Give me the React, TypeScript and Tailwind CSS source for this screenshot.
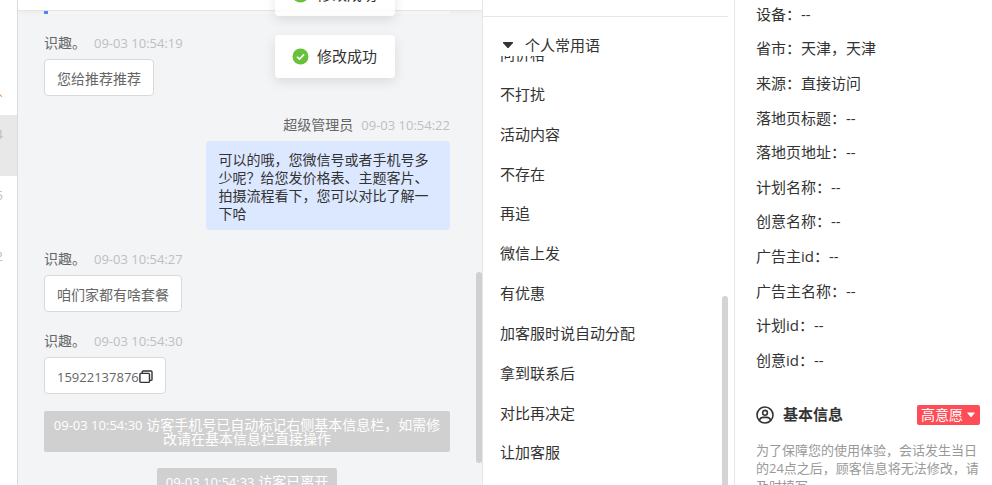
import React from "react";

const phrases = [
  "问价格",
  "不打扰",
  "活动内容",
  "不存在",
  "再追",
  "微信上发",
  "有优惠",
  "加客服时说自动分配",
  "拿到联系后",
  "对比再决定",
  "让加客服",
];

const details: [string, string][] = [
  ["设备", "--"],
  ["省市", "天津，天津"],
  ["来源", "直接访问"],
  ["落地页标题", "--"],
  ["落地页地址", "--"],
  ["计划名称", "--"],
  ["创意名称", "--"],
  ["广告主id", "--"],
  ["广告主名称", "--"],
  ["计划id", "--"],
  ["创意id", "--"],
];

function CopyIcon() {
  return (
    <svg width="14" height="14" viewBox="0 0 14 14" fill="none" stroke="#333" strokeWidth="1.4">
      <rect x="0.9" y="3.4" width="9.6" height="9" rx="1" />
      <path d="M3.2 3.2V2a1 1 0 0 1 1-1H12a1 1 0 0 1 1 1v7.4a1 1 0 0 1-1 1h-1.4" />
    </svg>
  );
}

function UserIcon() {
  return (
    <svg width="18" height="18" viewBox="0 0 18 18" fill="none" stroke="#333" strokeWidth="1.6">
      <circle cx="9" cy="9" r="8" />
      <circle cx="9" cy="6.8" r="2.4" />
      <path d="M3.2 14.3c.9-2 2.3-2.9 4-2.9h3.6c1.7 0 3.1.9 4 2.9" />
    </svg>
  );
}

function Toast({ faded }: { faded?: boolean }) {
  return (
    <div
      role="status"
      className={`flex h-[43px] items-center gap-2 rounded px-[17px] text-[15px] text-[#333] shadow-[0_4px_12px_rgba(0,0,0,0.1)] ${
        faded ? "bg-white/85" : "bg-white"
      }`}
    >
      <svg width="17" height="17" viewBox="0 0 16 16" className="shrink-0">
        <circle cx="8" cy="8" r="7.5" fill="#67c23a" />
        <path d="M4.7 8.2l2.3 2.3 4.4-4.5" fill="none" stroke="#fff" strokeWidth="1.5" />
      </svg>
      <span className="whitespace-nowrap">修改成功</span>
    </div>
  );
}

function Message({
  name,
  time,
  mine,
  children,
}: {
  name: string;
  time: string;
  mine?: boolean;
  children: React.ReactNode;
}) {
  return (
    <article className={`flex flex-col gap-1.5 ${mine ? "items-end" : "items-start"}`}>
      <header className="flex items-center gap-2 leading-5">
        <span className="text-[#666]">{name}</span>
        <time className="text-[13px] text-[#bfbfbf]">{time}</time>
      </header>
      <div
        className={`rounded px-3 pt-[10px] pb-[7px] leading-[18px] ${
          mine ? "max-w-3/5 bg-[#dce8ff] text-[#333]" : "border border-[#d9d9d9] bg-white text-[#666]"
        }`}
      >
        {children}
      </div>
    </article>
  );
}

function Notice({ time, text }: { time: string; text: string }) {
  return (
    <p className="rounded-xs bg-[#d0d0d0] px-[9px] py-[7px] text-center leading-[13px] text-white">
      <span className="text-[13px]">{time}</span> {text}
    </p>
  );
}

export default function App() {
  return (
    <div className="flex h-screen overflow-hidden bg-white font-['Open_Sans','Noto_Sans_CJK_SC',sans-serif] text-sm text-[#333]">
      <aside className="w-[18px] shrink-0 overflow-hidden border-r border-[#d9dbdf] pt-[54px] text-[13px] text-[#bfbfbf]">
        <ul className="flex flex-col">
          <li className="h-[61px] pt-9">
            <svg width="3" height="12" viewBox="0 0 3 12" className="block">
              <path d="M0 4.5L2 7" stroke="#f5a05a" strokeWidth="1.2" fill="none" />
            </svg>
          </li>
          {["4", "5", "2"].map((digit) => (
            <li
              key={digit}
              className={`flex h-[61px] justify-end pt-[9px] pr-[14px] leading-5 ${digit === "4" ? "bg-[#e8e8e8]" : ""}`}
            >
              {digit}
            </li>
          ))}
        </ul>
      </aside>

      <main className="relative flex min-w-0 flex-1 flex-col border-r border-[#e6e6e6] bg-[#f3f4f6]">
        <div className="z-10 h-[11px] shrink-0 border-b border-[#e6e6e6] bg-white shadow-[0_2px_4px_rgba(0,0,0,0.03)]" />
        <div className="flex min-h-0 flex-1">
          <section className="min-w-0 flex-1 overflow-hidden pr-[26px] pl-[26px]">
            <div className="flex flex-col gap-[19px]">
              <div className="h-[3px] border-l-4 border-[#4d8bf5] bg-[#fafafa]" />
              <Message name="识趣。" time="09-03 10:54:19">
                您给推荐推荐
              </Message>
              <Message name="超级管理员" time="09-03 10:54:22" mine>
                可以的哦，您微信号或者手机号多少呢？给您发价格表、主题客片、拍摄流程看下，您可以对比了解一下哈
              </Message>
              <Message name="识趣。" time="09-03 10:54:27">
                咱们家都有啥套餐
              </Message>
              <Message name="识趣。" time="09-03 10:54:30">
                <span className="flex items-center text-[13px]">
                  15922137876
                  <button type="button" aria-label="复制">
                    <CopyIcon />
                  </button>
                </span>
              </Message>
            </div>
            <div className="mt-[17px] flex flex-col items-center gap-4">
              <Notice time="09-03 10:54:30" text="访客手机号已自动标记右侧基本信息栏，如需修改请在基本信息栏直接操作" />
              <Notice time="09-03 10:54:33" text="访客已离开" />
            </div>
          </section>
          <div className="w-1.5 shrink-0 pt-[261px]">
            <div className="h-[191px] rounded-full bg-[#d0d0d0]" />
          </div>
        </div>
        <div className="absolute top-[-27px] left-[257px] z-20 flex w-[120px] flex-col gap-[19px]">
          <Toast faded />
          <Toast />
        </div>
      </main>

      <section className="flex w-[252px] shrink-0 flex-col border-r border-[#e6e6e6] pr-1.5 text-[15px]">
        <div className="h-[17px] shrink-0 border-b border-[#e6e6e6]" />
        <h2 className="flex h-[39px] shrink-0 items-center pt-[17px] pl-[19px] leading-5">
          <button type="button" className="flex items-center gap-[11px]">
            <svg width="12" height="8" viewBox="0 0 12 8">
              <path d="M1 1h10v1L6.5 7h-1L1 2z" fill="#333" />
            </svg>
            个人常用语
          </button>
        </h2>
        <div className="flex min-h-0 flex-1">
          <div className="min-w-0 flex-1 overflow-hidden">
            <ul className="-mt-[21px] grid h-[438px] auto-rows-fr pl-[17px]">
              {phrases.map((phrase) => (
                <li key={phrase} className="flex items-center">
                  {phrase}
                </li>
              ))}
            </ul>
          </div>
          <div className="w-1.5 shrink-0 pt-[240px]">
            <div className="h-full rounded-t-full bg-[#d4d4d4]" />
          </div>
        </div>
      </section>

      <aside className="w-[257px] shrink-0 overflow-hidden pr-3 pl-[21px] text-[15px]">
        <dl className="-mt-[3px] grid h-[381px] auto-rows-fr">
          {details.map(([label, value]) => (
            <div key={label} className="flex items-center">
              <dt>{label}：</dt>
              <dd>{value}</dd>
            </div>
          ))}
        </dl>
        <div className="mt-[27px] flex h-5 items-center">
          <UserIcon />
          <h2 className="ml-[9px] font-bold">基本信息</h2>
          <button
            type="button"
            className="ml-auto flex h-5 items-center gap-[3px] rounded-xs bg-[#ff4d57] px-1 text-sm leading-5 text-white"
          >
            高意愿
            <svg width="10" height="6" viewBox="0 0 10 6">
              <path d="M1 .5h8L5.5 5h-1z" fill="#fff" />
            </svg>
          </button>
        </div>
        <p className="mt-4 text-[13px] leading-[18px] text-[#999]">
          为了保障您的使用体验，会话发生当日的24点之后，顾客信息将无法修改，请及时填写
        </p>
      </aside>
    </div>
  );
}
